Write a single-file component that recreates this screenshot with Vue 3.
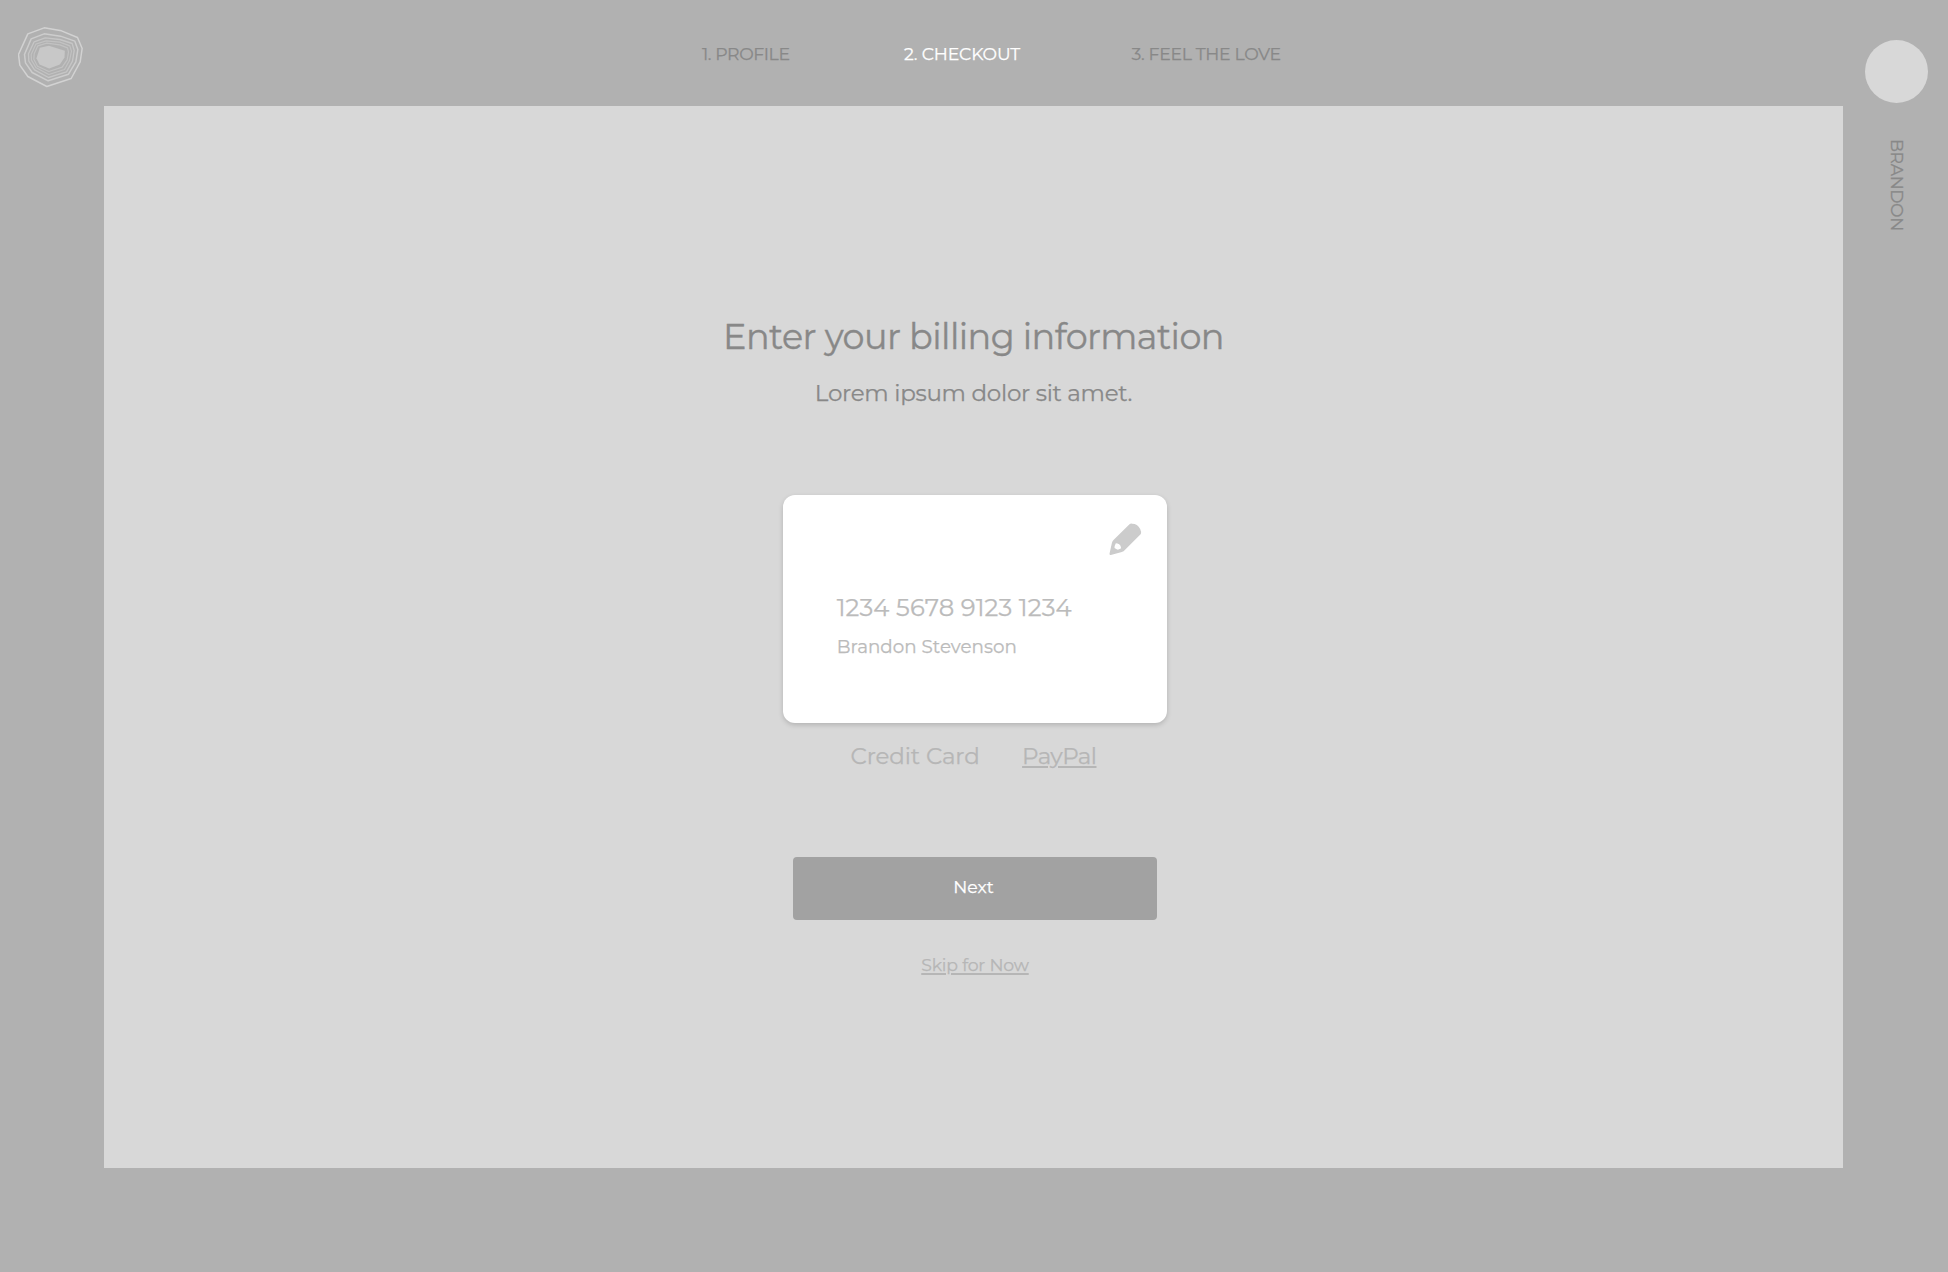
<script setup>
const steps = [
  { label: '1. PROFILE', key: 'profile' },
  { label: '2. CHECKOUT', key: 'checkout' },
  { label: '3. FEEL THE LOVE', key: 'love' },
]
const current = 'checkout'
</script>

<template>
  <div class="page">
    <aside class="rail">
      <svg class="logo" width="66" height="62" viewBox="54.5 47.5 198 186" fill="none">
        <g stroke-linejoin="round">
          <path class="r1" d="M84 71 133 53 185 62 233 82 247 115 241 155 214 205 141 229 84 199 60 165 56 133Z" />
          <path class="r2" d="M94 86 133 71 182 78 225 93 234 118 228 155 206 192 145 212 97 187 77 158 74 133Z" />
          <path class="r3" d="M103 95 136 83 180 88 217 100 223 121 218 153 200 185 146 202 104 179 87 153 86 131Z" />
          <path class="r4" d="M108 102 139 92 180 96 210 107 215 123 209 151 194 178 147 193 109 173 95 150 94 133Z" />
          <path class="r5" d="M114 107 141 99 180 104 203 113 206 126 202 149 187 171 147 184 113 168 102 147 103 131Z" />
        </g>
        <path class="core" d="M120 113 147 107 195 122 194 142 180 163 148 175 119 163 110 144Z" />
      </svg>
    </aside>

    <div class="center">
      <nav class="steps">
        <span v-for="s in steps" :key="s.key" :class="[s.key, { active: s.key === current }]">{{ s.label }}</span>
      </nav>

      <main class="panel">
        <h1>Enter your billing information</h1>
        <p class="lead">Lorem ipsum dolor sit amet.</p>

        <section class="card">
          <svg class="edit" width="34" height="34" viewBox="-1.5 -1 102 102">
            <path d="M60 3Q63 0 68 1Q76 1 82 5Q88 9 92 17Q96 25 94 32L46 80Q43 84 37 86L4 95Q0 96 0 91L7 60Q8 54 12 50ZM19 60Q15 67 15 74Q20 78 25 79Q31 78 35 75Q34 66 29 63Q24 60 19 60Z" fill-rule="evenodd" />
          </svg>
          <div class="number">1234 5678 9123 1234</div>
          <div class="name">Brandon Stevenson</div>
        </section>

        <div class="methods">
          <span class="credit">Credit Card</span>
          <a class="paypal">PayPal</a>
        </div>

        <button class="next">Next</button>
        <a class="skip">Skip for Now</a>
      </main>
    </div>

    <aside class="user">
      <div class="avatar"></div>
      <div class="username">BRANDON</div>
    </aside>
  </div>
</template>

<style>
body { background: #b1b1b1; }
</style>

<style scoped>
.page {
  display: flex;
  width: 1948px;
  height: 1272px;
  overflow: hidden;
  background: #b1b1b1;
  color: #888;
  font-family: Montserrat, Inter, sans-serif;
  font-weight: 400;
  -webkit-text-stroke: .25px currentColor;
}
.rail { flex: 0 0 104px; padding: 26px 0 0 18px; box-sizing: border-box; }
.logo { display: block; }
.r1, .r2 { stroke: #d2d2d2; stroke-width: 4.5; }
.r2 { stroke: #cdcdcd; }
.r3 { stroke: #c6c6c6; stroke-width: 4; }
.r4, .r5 { stroke: #c2c2c2; stroke-width: 3.5; }
.core { fill: #c8c8c8; }
.center { flex: 0 0 1739px; }
.steps {
  box-sizing: border-box;
  height: 105.5px;
  padding-top: 42px;
  padding-left: 598px;
  display: flex;
  font-size: 17.3px;
  line-height: 24px;
  white-space: nowrap;
}
.steps span { flex: none; }
.steps .profile { width: 202px; letter-spacing: -.4px; }
.steps .checkout { width: 227.5px; letter-spacing: -.16px; }
.steps .love { letter-spacing: -.31px; }
.steps .active { color: #fff; }
.panel {
  box-sizing: border-box;
  height: 1062.5px;
  padding-top: 209px;
  background: #d8d8d8;
  display: flex;
  flex-direction: column;
  align-items: center;
}
h1 { margin: 0; font-size: 35px; line-height: 44px; font-weight: inherit; letter-spacing: -.56px; -webkit-text-stroke-width: .35px; }
.lead { margin: 19px 0 0; font-size: 23px; line-height: 30px; letter-spacing: -.27px; }
.card {
  position: relative;
  box-sizing: border-box;
  width: 384px;
  height: 227.5px;
  margin: 87.5px 0 0 3px;
  padding: 97.3px 0 0 53.7px;
  border-radius: 12px;
  background: #fff;
  box-shadow: 0 2px 5px rgba(0, 0, 0, .17);
  display: flex;
  flex-direction: column;
  align-items: flex-start;
  color: #bbb;
}
.edit { position: absolute; right: 24px; top: 28.3px; fill: #ccc; }
.number { font-size: 24.3px; line-height: 30px; letter-spacing: .13px; }
.name { margin-top: 13.2px; font-size: 18.3px; line-height: 24px; letter-spacing: .04px; }
.methods { display: flex; gap: 42.4px; margin-top: 18.5px; font-size: 23px; line-height: 30px; color: #b6b6b6; }
.credit { letter-spacing: -.1px; }
.paypal { letter-spacing: -.55px; }
.paypal, .skip { text-decoration: underline; text-decoration-thickness: 1.5px; text-underline-offset: 2px; }
.next {
  width: 364px;
  height: 63px;
  margin: 86px 0 0 3px;
  padding: 0 3px 3px 0;
  border: 0;
  border-radius: 4px;
  background: #a2a2a2;
  color: #fff;
  font: inherit;
  font-size: 17.3px;
  line-height: 24px;
}
.skip { margin: 33px 0 0 3px; font-size: 17.3px; line-height: 24px; letter-spacing: -.18px; color: #b6b6b6; }
.user { flex: 0 0 105px; box-sizing: border-box; display: flex; flex-direction: column; align-items: center; padding: 40px 0 0 2.8px; }
.avatar { width: 63px; height: 63px; border-radius: 50%; background: #d8d8d8; }
.username { margin-top: 35.5px; writing-mode: vertical-rl; font-size: 17.3px; line-height: 24px; letter-spacing: -.43px; }
</style>
